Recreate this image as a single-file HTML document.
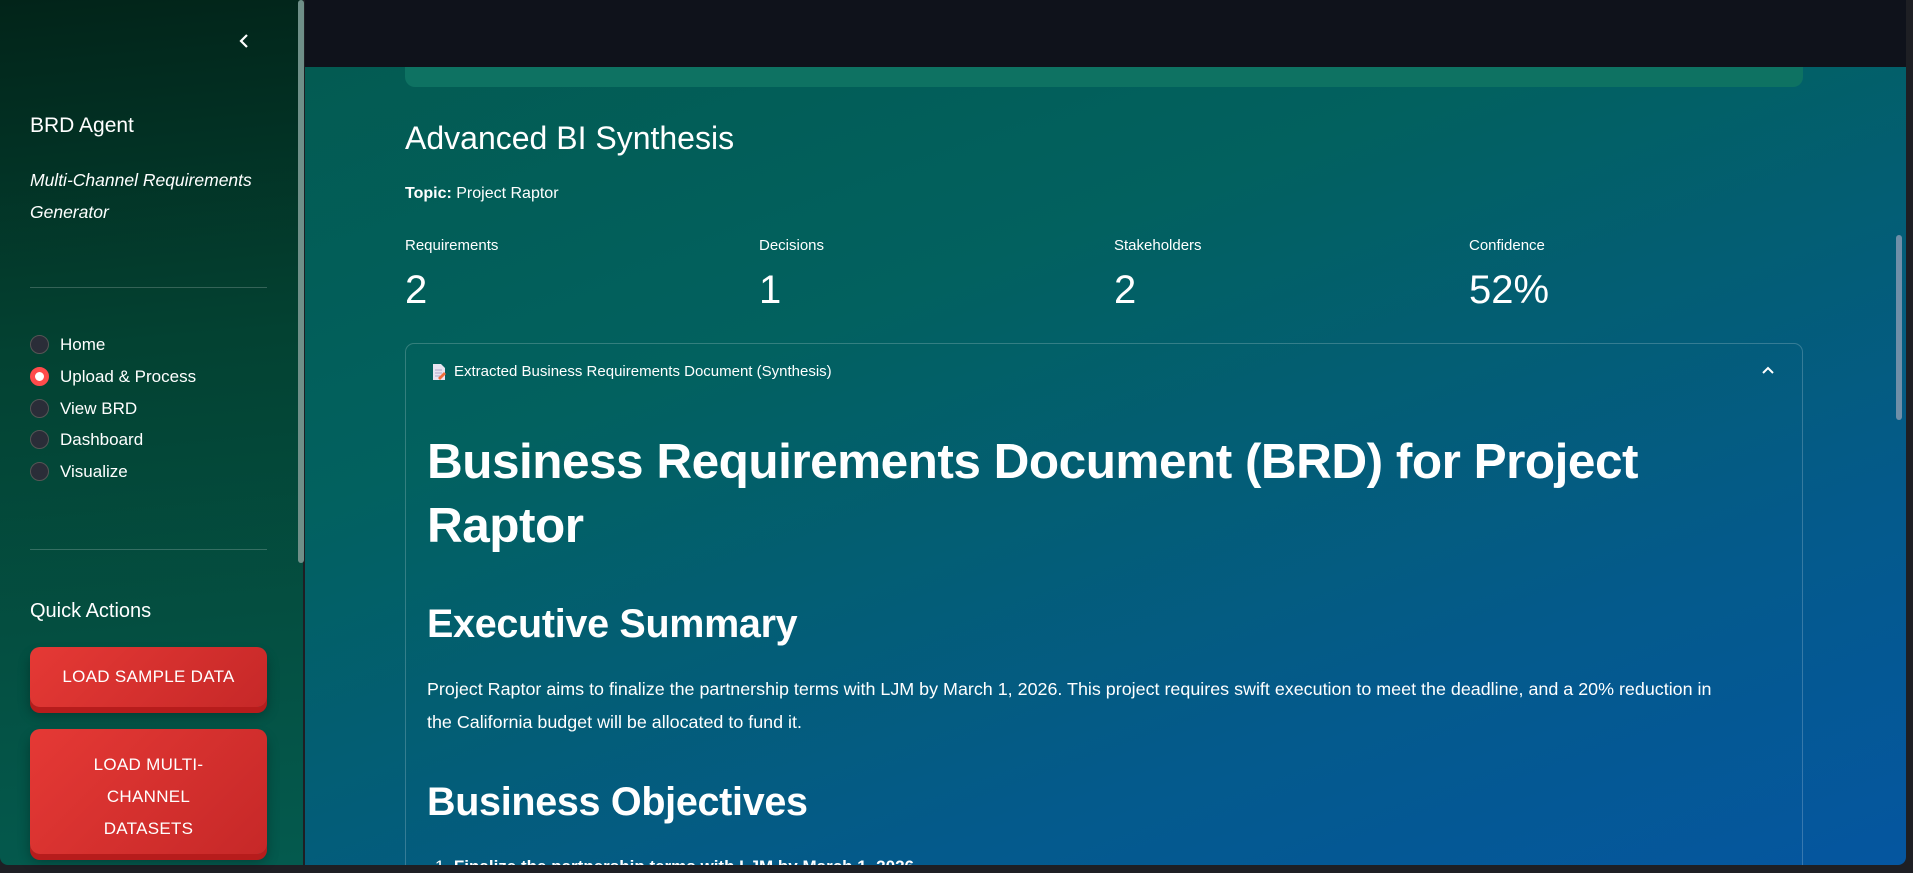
<!DOCTYPE html>
<html><head><meta charset="utf-8"><style>
*{margin:0;padding:0;box-sizing:border-box}
html,body{width:1913px;height:873px;overflow:hidden;background:#1e1f24;font-family:"Liberation Sans",sans-serif;color:#fff}
#side{position:absolute;left:0;top:0;width:303px;height:865px;background:linear-gradient(175deg,#022419 0%,#034232 40%,#045a4e 100%);border-bottom-left-radius:8px}
#sbar{position:absolute;left:298px;top:0;width:6px;height:563px;background:#6f8f88;border-radius:3px}
#main{position:absolute;left:305px;top:0;width:1601px;height:865px;background:linear-gradient(160deg,#035a50 0%,#02615f 35%,#045a8c 75%,#0556a0 100%);overflow:hidden;border-bottom-right-radius:8px}
#top{position:absolute;left:0;top:0;width:100%;height:67px;background:#0f121b}
#green{position:absolute;left:100px;top:67px;width:1398px;height:20px;background:#0e7262;border-radius:0 0 10px 10px}
#mscroll{position:absolute;left:1896px;top:235px;width:6px;height:185px;background:#6f8fa8;border-radius:3px}
.a{position:absolute;white-space:nowrap}
.radio{position:absolute;left:30px;width:19px;height:19px;border-radius:50%;background:#2a2d38;border:1px solid #555}
.btn{position:absolute;left:30px;width:237px;background:linear-gradient(135deg,#e53935,#c62828);border-radius:10px;box-shadow:0 6px 0 #b71c1c,0 8px 12px rgba(0,0,0,.3);color:#fff;font-size:17px;text-align:center;letter-spacing:.3px}
hr{position:absolute;left:30px;width:237px;border:0;border-top:1px solid rgba(255,255,255,.2)}
</style></head><body>
<div id="side">
 <svg class="a" style="left:238px;top:33px" width="14" height="16" viewBox="0 0 14 16"><path d="M9 2 L3 8 L9 14" stroke="#fff" stroke-width="2.2" fill="none"/></svg>
 <div class="a" style="left:30px;top:114px;font-size:21px">BRD Agent</div>
 <div class="a" style="left:30px;top:164px;font-size:17.5px;font-style:italic;line-height:32px">Multi-Channel Requirements<br>Generator</div>
 <hr style="top:287px">
 <div class="radio" style="top:335px"></div><div class="a" style="left:60px;top:335px;font-size:17px">Home</div>
 <div class="radio" style="top:367px;background:#fff;border:5px solid #ff4b4b"></div><div class="a" style="left:60px;top:367px;font-size:17px">Upload &amp; Process</div>
 <div class="radio" style="top:399px"></div><div class="a" style="left:60px;top:399px;font-size:17px">View BRD</div>
 <div class="radio" style="top:430px"></div><div class="a" style="left:60px;top:430px;font-size:17px">Dashboard</div>
 <div class="radio" style="top:462px"></div><div class="a" style="left:60px;top:462px;font-size:17px">Visualize</div>
 <hr style="top:549px">
 <div class="a" style="left:30px;top:600px;font-size:20px">Quick Actions</div>
 <div class="btn" style="top:647px;height:60px;line-height:60px">LOAD SAMPLE DATA</div>
 <div class="btn" style="top:729px;height:125px;padding-top:20px;line-height:32px">LOAD MULTI-<br>CHANNEL<br>DATASETS</div>
</div>
<div id="sbar"></div>
<div id="main">
 <div id="top"></div>
 <div id="green"></div>
 <div class="a" style="left:100px;top:120px;font-size:32px">Advanced BI Synthesis</div>
 <div class="a" style="left:100px;top:185px;font-size:16px"><b>Topic:</b> Project Raptor</div>
 <div class="a" style="left:100px;top:237px;font-size:15px">Requirements</div>
 <div class="a" style="left:454px;top:237px;font-size:15px">Decisions</div>
 <div class="a" style="left:809px;top:237px;font-size:15px">Stakeholders</div>
 <div class="a" style="left:1164px;top:237px;font-size:15px">Confidence</div>
 <div class="a" style="left:100px;top:268px;font-size:40px">2</div>
 <div class="a" style="left:454px;top:268px;font-size:40px">1</div>
 <div class="a" style="left:809px;top:268px;font-size:40px">2</div>
 <div class="a" style="left:1164px;top:268px;font-size:40px">52%</div>
 <div class="a" style="left:100px;top:343px;width:1398px;height:600px;border:1px solid rgba(255,255,255,.2);border-radius:9px"></div>
 <svg class="a" style="left:127px;top:363px" width="14" height="18" viewBox="0 0 14 18"><path d="M1 1h8l4 4v12H1z" fill="#e8e4f0"/><path d="M3 7h7M3 10h7M3 13h5" stroke="#b0a8c8"/><path d="M6 15l6-6 2 2-6 6z" fill="#ef6c3a"/></svg>
 <div class="a" style="left:149px;top:363px;font-size:15px">Extracted Business Requirements Document (Synthesis)</div>
 <svg class="a" style="left:1457px;top:366px" width="12" height="8" viewBox="0 0 12 8"><path d="M1 7 L6 2 L11 7" stroke="#fff" stroke-width="2" fill="none"/></svg>
 <div class="a" style="left:122px;top:430px;font-size:49.5px;font-weight:bold;line-height:64px;letter-spacing:-0.5px">Business Requirements Document (BRD) for Project<br>Raptor</div>
 <div class="a" style="left:122px;top:602px;font-size:39.5px;font-weight:bold;letter-spacing:-0.3px">Executive Summary</div>
 <div class="a" style="left:122px;top:673px;font-size:17.9px;line-height:33px">Project Raptor aims to finalize the partnership terms with LJM by March 1, 2026. This project requires swift execution to meet the deadline, and a 20% reduction in<br>the California budget will be allocated to fund it.</div>
 <div class="a" style="left:122px;top:780px;font-size:39.5px;font-weight:bold;letter-spacing:-0.3px">Business Objectives</div>
 <div class="a" style="left:130px;top:857px;font-size:17px">1. <b>Finalize the partnership terms with LJM by March 1, 2026</b></div>
</div>
<div id="mscroll"></div>
</body></html>
